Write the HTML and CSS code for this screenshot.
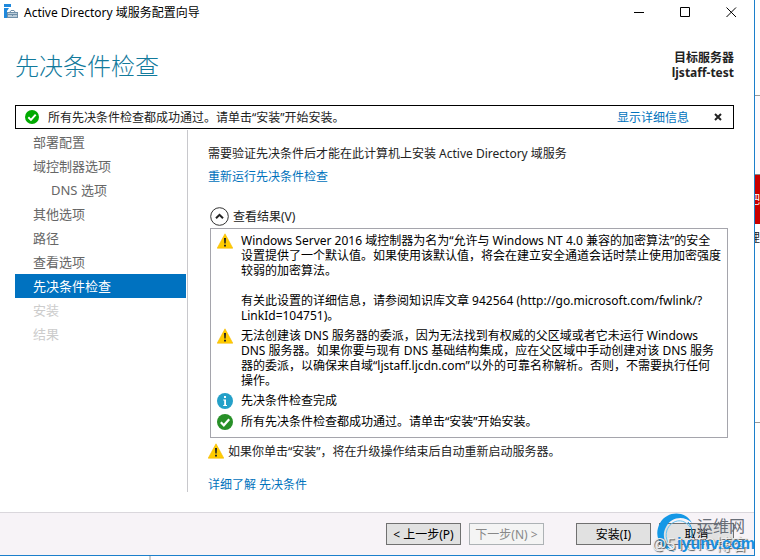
FILE: index.html
```html
<!DOCTYPE html>
<html lang="zh-CN">
<head>
    <meta charset="UTF-8">
    <meta name="viewport" content="width=device-width, initial-scale=1.0">
    <title>Active Directory 域服务配置向导</title>
    <link rel="stylesheet" href="styles.css">
</head>
<body>
    <svg class="defs" aria-hidden="true">
        <symbol id="warning" viewBox="0 0 16 16">
            <path d="M8 0.8 L15.8 15.2 H0.2 Z" fill="#fc0" stroke="#f5b800" stroke-width="0.6" stroke-linejoin="round"/>
            <path d="M7 5 H9 L8.7 10.5 H7.3 Z M7 11.8 H9 V13.6 H7 Z" fill="#222"/>
        </symbol>
        <symbol id="info" viewBox="0 0 16 16">
            <circle cx="8" cy="8" r="8" fill="#24a0c8"/>
            <path d="M7 3 H9 V5 H7 Z M6.2 6.4 H9 V12 H10 V13 H6.2 V12 H7.2 V7.4 H6.2 Z" fill="#fff"/>
        </symbol>
        <symbol id="check" viewBox="0 0 16 16">
            <circle cx="8" cy="8" r="8" fill="currentColor"/>
            <path d="M3.8 8.3 L6.8 11.3 L12.2 5.2" fill="none" stroke="#fff" stroke-width="2.2"/>
        </symbol>
    </svg>

    <main class="window">
        <header class="titlebar">
            <svg class="titlebar__icon" viewBox="0 0 16 16" aria-hidden="true">
                <path d="M0 0 H7 V3 H0 Z M0 4 H5 L3 7 V14 H0 Z" fill="#1e88dc"/>
                <path d="M3 8 H14 V14 H3 Z" fill="#6f8fa8"/>
                <path d="M6 8 L7 6.5 H10 L11 8" fill="none" stroke="#6f8fa8"/>
                <path d="M4 9 H13 V10 H4 Z M4 11 H8 V12 H9 V11 H13 V13 H4 Z" fill="#b9cbd8"/>
            </svg>
            <span class="titlebar__text">Active Directory 域服务配置向导</span>
            <button class="titlebar__button" type="button" aria-label="最小化">
                <svg viewBox="0 0 11 11"><path d="M0 5.5 H10"/></svg>
            </button>
            <button class="titlebar__button" type="button" aria-label="最大化">
                <svg viewBox="0 0 11 11"><path d="M0.5 0.5 H9.5 V9.5 H0.5 Z"/></svg>
            </button>
            <button class="titlebar__button" type="button" aria-label="关闭">
                <svg viewBox="0 0 11 11"><path d="M0.5 0.5 L10 10 M10 0.5 L0.5 10"/></svg>
            </button>
        </header>

        <div class="heading">
            <h1>先决条件检查</h1>
            <p class="heading__server">目标服务器<br>ljstaff-test</p>
        </div>

        <div class="notice">
            <svg class="notice__icon" aria-hidden="true"><use href="#check"/></svg>
            <span class="notice__text">所有先决条件检查都成功通过。请单击“安装”开始安装。</span>
            <a href="#details">显示详细信息</a>
            <button class="notice__close" type="button" aria-label="关闭">
                <svg viewBox="0 0 8 8"><path d="M1 1 L7 7 M7 1 L1 7"/></svg>
            </button>
        </div>

        <div class="wizard">
            <nav class="steps">
                <a class="step" href="#deploy">部署配置</a>
                <a class="step" href="#options">域控制器选项</a>
                <a class="step step_sub" href="#dns">DNS 选项</a>
                <a class="step" href="#other">其他选项</a>
                <a class="step" href="#paths">路径</a>
                <a class="step" href="#review">查看选项</a>
                <a class="step step_active" href="#check-page" aria-current="step">先决条件检查</a>
                <span class="step step_disabled">安装</span>
                <span class="step step_disabled">结果</span>
            </nav>

            <section class="content">
                <p>需要验证先决条件后才能在此计算机上安装 Active Directory 域服务</p>
                <a class="content__rerun" href="#rerun">重新运行先决条件检查</a>
                <button class="expander" type="button" aria-expanded="true">
                    <svg viewBox="0 0 19 19" aria-hidden="true">
                        <circle cx="9.5" cy="9.5" r="8.8" fill="none" stroke="#333"/>
                        <path d="M6 11.3 L9.5 7.8 L13 11.3" fill="none" stroke="#222" stroke-width="2"/>
                    </svg>
                    查看结果(V)
                </button>
                <ul class="results">
                    <li class="result">
                        <svg class="result__icon" aria-hidden="true"><use href="#warning"/></svg>
                        <div>
                            <p>Windows Server 2016 域控制器为名为“允许与 Windows NT 4.0 兼容的加密算法”的安全<br>设置提供了一个默认值。如果使用该默认值，将会在建立安全通道会话时禁止使用加密强度<br>较弱的加密算法。</p>
                            <p class="result__more">有关此设置的详细信息，请参阅知识库文章 942564 (http://go.microsoft.com/fwlink/?<br>LinkId=104751)。</p>
                        </div>
                    </li>
                    <li class="result">
                        <svg class="result__icon" aria-hidden="true"><use href="#warning"/></svg>
                        <p>无法创建该 DNS 服务器的委派，因为无法找到有权威的父区域或者它未运行 Windows<br>DNS 服务器。如果你要与现有 DNS 基础结构集成，应在父区域中手动创建对该 DNS 服务<br>器的委派，以确保来自域“ljstaff.ljcdn.com”以外的可靠名称解析。否则，不需要执行任何<br>操作。</p>
                    </li>
                    <li class="result">
                        <svg class="result__icon" aria-hidden="true"><use href="#info"/></svg>
                        <p>先决条件检查完成</p>
                    </li>
                    <li class="result">
                        <svg class="result__icon result__icon_ok" aria-hidden="true"><use href="#check"/></svg>
                        <p>所有先决条件检查都成功通过。请单击“安装”开始安装。</p>
                    </li>
                </ul>
                <p class="restart">
                    <svg class="result__icon" aria-hidden="true"><use href="#warning"/></svg>
                    如果你单击“安装”，将在升级操作结束后自动重新启动服务器。
                </p>
                <a class="content__learn" href="#learn">详细了解 先决条件</a>
            </section>
        </div>

        <footer class="footer">
            <button class="button" type="button">&lt; 上一步(P)</button>
            <button class="button" type="button" disabled>下一步(N) &gt;</button>
            <button class="button button_install" type="button">安装(I)</button>
            <button class="button" type="button">取消</button>
        </footer>
    </main>

    <aside class="behind">
        <div class="behind__top"></div>
        <div class="behind__gap"></div>
        <div class="behind__alert">吧</div>
        <div class="behind__text">理</div>
        <div class="behind__rest"></div>
    </aside>
    <div class="below"></div>

    <div class="watermark">
        <svg class="watermark__logo" viewBox="0 0 40 44" aria-hidden="true">
            <path d="M36 11 C29 -2 11 -1 4 11 C-3 24 4 37 19 40 C9 34 5 24 10 15 C15 5 28 3 36 11 Z" fill="#1598e6"/>
            <path d="M34 15 C27 5 15 8 11 18 C8 27 13 34 20 38" fill="none" stroke="#62c3f4" stroke-width="1"/>
            <path d="M32 10 C38 17 37 26 32 32" fill="none" stroke="#1598e6" stroke-width="1"/>
        </svg>
        <span class="watermark__name">运维网</span>
        <span class="watermark__blog">@51CTO博客</span>
        <span class="watermark__site">iyunv.com</span>
    </div>
</body>
</html>
```

FILE: styles.css
```css
* {
    box-sizing: border-box;
}

body {
    margin: 0;
    min-height: 100vh;
    display: grid;
    grid-template-columns: 1fr 5px;
    grid-template-rows: 1fr 4px;
    position: relative;
    overflow: hidden;
    background: #fff;
    color: #222;
    font: 12px/15px "Noto Sans", "Noto Sans CJK SC", sans-serif;
}

h1, p, ul {
    margin: 0;
    padding: 0;
}

a {
    color: #0072bc;
    text-decoration: none;
}

button {
    font: inherit;
    color: inherit;
    padding: 0;
    border: 0;
    background: none;
}

.defs {
    position: absolute;
    width: 0;
    height: 0;
}

.window {
    display: flex;
    flex-direction: column;
    border-right: 1px solid #1c7fcb;
    border-bottom: 1px solid #1c7fcb;
    white-space: nowrap;
    min-width: 0;
}

.titlebar {
    display: flex;
    align-items: center;
    height: 24px;
    padding-left: 4px;
    color: #000;
}

.titlebar__icon {
    width: 16px;
    height: 16px;
    margin-right: 4px;
}

.titlebar__text {
    flex: 1;
}

.titlebar__button {
    width: 46px;
    height: 24px;
}

.titlebar__button svg {
    display: block;
    width: 11px;
    height: 11px;
    margin: 0 auto;
    fill: none;
    stroke: #000;
}

.heading {
    display: flex;
    justify-content: space-between;
    height: 81px;
    padding: 26px 20px 0 15px;
}

h1 {
    color: #127a9c;
    font-size: 24px;
    font-weight: 300;
    line-height: 32px;
}

.heading__server {
    font-weight: bold;
    text-align: right;
}

.notice {
    display: flex;
    align-items: center;
    height: 24px;
    margin: 0 20px 0 15px;
    padding: 0 11px 0 9px;
    border: 1px solid #000;
}

.notice__icon {
    width: 14px;
    height: 14px;
    margin-right: 9px;
    color: #0a0;
}

.notice__text {
    flex: 1;
}

.notice__close {
    width: 8px;
    height: 8px;
    margin-left: 25px;
}

.notice__close svg {
    display: block;
    stroke: #222;
    stroke-width: 2;
}

.wizard {
    flex: 1;
    display: flex;
    padding: 1px 20px 20px 15px;
}

.steps {
    width: 173px;
    padding-right: 1px;
    border-right: 1px solid #c8c8cc;
}

.step {
    display: block;
    height: 24px;
    padding-left: 18px;
    color: #666;
    font-size: 13px;
    line-height: 24px;
}

.step_sub {
    padding-left: 36px;
}

.step_active {
    background: #0072c0;
    color: #fff;
}

.step_disabled {
    color: #ccc;
}

.content {
    flex: 1;
    display: flex;
    flex-direction: column;
    align-items: flex-start;
    padding: 16px 6px 0 20px;
}

.content__rerun {
    margin: 8px 0 23px;
}

.expander {
    display: flex;
    align-items: center;
    gap: 4px;
    margin-left: 2px;
}

.expander svg {
    width: 19px;
    height: 19px;
}

.results {
    align-self: stretch;
    display: flex;
    flex-direction: column;
    gap: 5px;
    margin: 2px 0 5px 2px;
    padding: 4px 6px 7px;
    border: 1px solid #a5a5ac;
    color: #000;
    list-style: none;
}

.result {
    display: flex;
    gap: 8px;
}

.result__icon {
    flex: none;
    width: 16px;
    height: 16px;
}

.result__icon_ok {
    color: #289028;
}

.result__more {
    margin-top: 15px;
}

.restart {
    display: flex;
    align-items: center;
    gap: 4px;
}

.content__learn {
    margin-top: 18px;
}

.footer {
    display: flex;
    align-items: center;
    justify-content: flex-end;
    gap: 8px;
    height: 43px;
    padding-right: 20px;
    border-top: 1px solid #dad7dc;
    background: #f7f3f7;
}

.button {
    width: 75px;
    height: 22px;
    border: 1px solid #707070;
    background: #e1e1e1;
    color: #000;
}

.button:disabled {
    border-color: #adb2b5;
    background: #f4f4f4;
    color: #888;
}

.button_install {
    margin-left: 24px;
}

/* slivers of the window behind */
.behind {
    display: flex;
    flex-direction: column;
    overflow: hidden;
}

.behind__top {
    height: 96px;
    border-bottom: 1px solid #999;
}

.behind__gap {
    height: 78px;
    background: #fefbfe;
}

.behind__alert {
    height: 50px;
    border-top: 1px solid #888;
    background: #c80000;
    color: #fff;
    line-height: 50px;
    direction: rtl;
}

.behind__text {
    height: 28px;
    line-height: 28px;
    direction: rtl;
}

.behind__rest {
    height: 171px;
    border-bottom: 1px solid #999;
}

.below {
    grid-column: 1 / 3;
    margin-left: 149px;
    border-left: 2px solid #ccc;
    background: #fefbfe;
}

.watermark {
    position: absolute;
    right: 5px;
    bottom: 4px;
    width: 103px;
    height: 44px;
    white-space: nowrap;
    pointer-events: none;
}

.watermark span,
.watermark__logo {
    position: absolute;
}

.watermark__logo {
    left: 4px;
    top: 0;
    width: 40px;
    height: 44px;
}

.watermark__name {
    right: 10px;
    top: 4px;
    color: #686e78;
    font-size: 16px;
    line-height: 20px;
}

.watermark__blog {
    left: 0;
    bottom: 2px;
    color: #eee;
    font-size: 16px;
    line-height: 20px;
    text-shadow: 1px 1px 1px #555;
}

.watermark__site {
    right: 0;
    bottom: 2px;
    color: #178fe0;
    font: bold 16px/20px "Liberation Sans", sans-serif;
}
```
